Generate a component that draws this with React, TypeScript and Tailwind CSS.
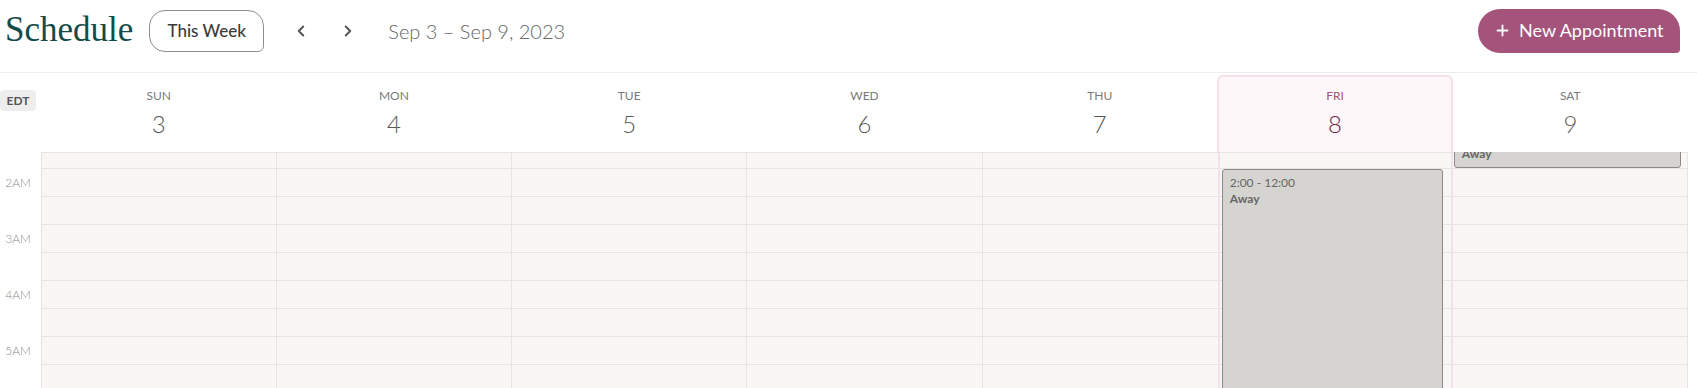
import { ChevronLeft, ChevronRight, Plus } from 'lucide-react'

const days = [
  { name: 'SUN', num: 3 },
  { name: 'MON', num: 4 },
  { name: 'TUE', num: 5 },
  { name: 'WED', num: 6 },
  { name: 'THU', num: 7 },
  { name: 'FRI', num: 8, today: true },
  { name: 'SAT', num: 9 },
]

// first row is the tail of the 1:30 slot, scrolled partly out of view
const rows = [16, 28, 28, 28, 28, 28, 28, 28, 28]
const hourLabels: Record<number, string> = { 1: '2AM', 3: '3AM', 5: '4AM', 7: '5AM' }

function Header() {
  return (
    <header className="flex items-center h-[73px] pb-[11px] pl-[5px] pr-[17px] border-b border-[#ededed]">
      <h1 className="text-[35px] leading-none text-[#134b4b] font-['Liberation_Serif',serif] -mt-[3px]">Schedule</h1>
      <button className="ml-[16px] w-[115px] h-[42px] border border-[#8e8e8e] rounded-[16px] rounded-br-[6px] text-[17px] font-medium text-[#3a3a3a]">
        This Week
      </button>
      <div className="flex items-center ml-[28px] gap-[29px] text-[#555]">
        <ChevronLeft size={18} strokeWidth={2.6} />
        <ChevronRight size={18} strokeWidth={2.6} />
      </div>
      <span className="ml-[31px] text-[20px] font-light text-[#666]">Sep 3 – Sep 9, 2023</span>
      <button className="ml-auto flex items-center gap-[8px] pl-[16px] w-[202px] h-[44px] bg-[#a4537b] rounded-[22px] rounded-br-[4px] text-white text-[18px]">
        <Plus size={17} strokeWidth={2.6} />
        New Appointment
      </button>
    </header>
  )
}

function DayHeaders() {
  return (
    <div className="flex h-[79px] pt-[2px]">
      <div className="w-[41px] pt-[15px]">
        <div className="w-[36px] h-[21px] rounded-[4px] bg-[#eeeeee] flex items-center justify-center text-[12px] font-bold text-[#555]">
          EDT
        </div>
      </div>
      <div className="flex-1 grid grid-cols-7">
        {days.map((d) => (
          <div
            key={d.name}
            className={
              d.today
                ? 'flex flex-col items-center pt-[11px] border-2 border-b-0 border-[#f6dfea] rounded-t-[6px] bg-[#fdf7fa]'
                : 'flex flex-col items-center pt-[13px]'
            }
          >
            <span className={d.today ? 'text-[12px] leading-[16px] text-[#a4537b]' : 'text-[12px] leading-[16px] text-[#7a7a7a]'}>
              {d.name}
            </span>
            <span className={d.today ? 'mt-[5px] text-[24px] leading-[30px] font-light text-[#6e2a4c]' : 'mt-[5px] text-[24px] leading-[30px] font-light text-[#5a5a5a]'}>
              {d.num}
            </span>
          </div>
        ))}
      </div>
      <div className="w-[9px]" />
    </div>
  )
}

function Event({ time, title, className }: { time?: string; title: string; className: string }) {
  return (
    <div className={`absolute bg-[#d5d4d0] border border-[#8a8a88] rounded-[3px] px-[7px] text-[12px] leading-[16px] text-[#666] ${className}`}>
      {time && <div>{time}</div>}
      <div className="font-bold">{title}</div>
    </div>
  )
}

function Body() {
  return (
    <div className="flex h-[236px] overflow-hidden">
      <div className="w-[41px] border-t border-transparent">
        {rows.map((h, i) => (
          <div key={i} style={{ height: h }} className="flex items-center justify-end pr-[10px] text-[12px] font-light text-[#888]">
            {hourLabels[i]}
          </div>
        ))}
      </div>
      <div className="flex-1 grid grid-cols-7 bg-[#f8f7f5] border-t border-l border-[#e6e5e2]">
        {days.map((d, ci) => (
          <div
            key={d.name}
            className={
              d.today
                ? 'relative border-x-2 border-[#f6dfea]'
                : ci === 4
                ? 'relative'
                : 'relative border-r border-[#e6e5e2]'
            }
          >
            {rows.map((h, i) => (
              <div key={i} style={{ height: h }} className="border-b border-[#e6e5e2]" />
            ))}
            {d.today && (
              <Event time="2:00 - 12:00" title="Away" className="left-[2px] right-[8px] top-[16px] h-[260px] pt-[5px]" />
            )}
            {d.name === 'SAT' && (
              <Event title="Away" className="left-[1px] right-[6px] -top-[28px] h-[43px] flex flex-col justify-end pb-[5px]" />
            )}
          </div>
        ))}
      </div>
      <div className="w-[9px]" />
    </div>
  )
}

export default function App() {
  return (
    <div className="w-[1697px] h-[388px] bg-white overflow-hidden font-['Lato',sans-serif]">
      <Header />
      <DayHeaders />
      <Body />
    </div>
  )
}
